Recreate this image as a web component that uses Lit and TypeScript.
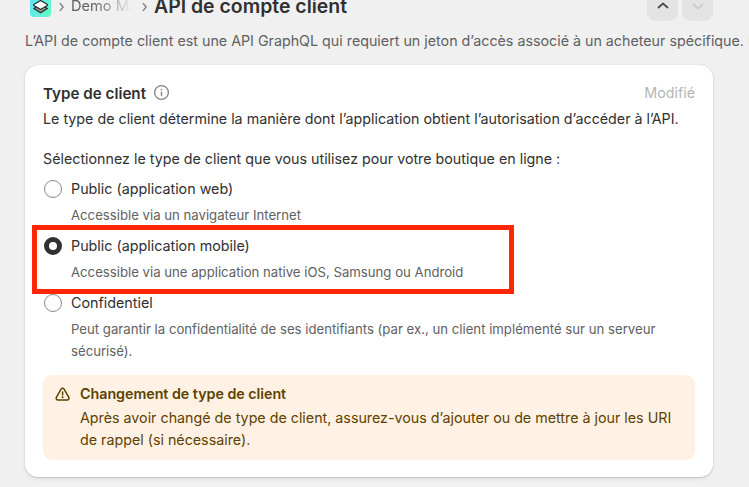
import { LitElement, html, css } from "lit";
import { customElement, property } from "lit/decorators.js";
import { classMap } from "lit/directives/class-map.js";

@customElement("client-choice")
export class ClientChoice extends LitElement {
  @property() label = "";
  @property() help = "";
  @property({ type: Boolean }) checked = false;

  static styles = css`
    :host { display: grid; grid-template-columns: 18px 1fr; column-gap: 9px; margin: 0 0 9px 1px; }
    .radio { box-sizing: border-box; width: 18px; height: 18px; margin-top: 2px; border: 1px solid #8a8a8a; border-radius: 50%; background: #fdfdfd; }
    .radio.on { border: 5px solid #303030; background: #fff; }
    .label { font-size: 14.3px; line-height: 22px; color: #303030; }
    .help { grid-column: 2; margin-top: 4px; font-size: 13.18px; line-height: 22px; color: #616161; }
  `;

  render() {
    return html`
      <span class=${classMap({ radio: true, on: this.checked })}></span>
      <span class="label">${this.label}</span>
      <span class="help">${this.help}</span>
    `;
  }
}

@customElement("app-root")
export class AppRoot extends LitElement {
  static styles = css`
    :host {
      display: block; position: relative; box-sizing: border-box; width: 749px; height: 487px; overflow: hidden;
      background: #f0f0f0; color: #303030; font-family: Inter, "Liberation Sans", sans-serif;
      font-size: 14.27px; line-height: 22px; white-space: nowrap;
    }
    svg { display: block; flex: none; }
    .header { display: flex; height: 30px; padding: 0 36px 0 30px; align-items: flex-start; }
    .app { margin-top: -5px; }
    .sep { margin: 2px 0 0 7px; }
    .crumb {
      width: 63px; margin: -5px 0 0 6px; overflow: hidden; color: #616161;
      font-size: 14.6px; -webkit-mask-image: linear-gradient(90deg, #000 35%, transparent 98%);
      mask-image: linear-gradient(90deg, #000 35%, transparent 98%);
    }
    .sep.second { margin-left: 8px; }
    h1 { margin: -5px 0 0 6px; font-size: 19.45px; line-height: 22px; font-weight: 635; }
    .pager { display: flex; gap: 4px; margin-left: auto; }
    .btn { display: flex; justify-content: center; width: 31px; height: 31px; margin-top: -10px; border-radius: 9px; background: #e3e3e3; }
    .btn svg { margin-top: 10px; }
    .intro { color: #616161; padding-left: 25px; height: 35px; }
    .card {
      box-sizing: border-box; width: 688px; height: 412px; margin-left: 25px; padding: 17px 18px; border-radius: 13px; background: #fff;
      box-shadow: 0 1px 1px #c8c8c8, 0 0 1px #bbb, 0 2px 4px #00000012;
    }
    .heading { display: flex; align-items: center; height: 22px; }
    h2 { margin: 0; padding-top: 1px; font-size: 15.2px; font-weight: 600; }
    .heading svg { margin: -1px 0 0 7px; }
    .status { margin-left: auto; color: #b5b5b5; }
    .desc { margin-top: 4px; }
    .prompt { margin: 18px 0 8px; }
    .banner {
      display: flex; box-sizing: border-box; height: 85px; margin-top: 13px; padding: 8px 9px;
      border-radius: 9px; background: #fff1e3; color: #5e4200;
    }
    .banner svg { margin: 1px 7px 0 0; }
    .strong { font-weight: 600; margin-bottom: 2px; letter-spacing: -0.02px; }
    .outline { position: absolute; box-sizing: border-box; left: 32px; top: 225px; width: 482px; height: 69px; border: 5px solid #ff2600; }
  `;

  private sep(second = false) {
    return html`<svg class=${classMap({ sep: true, second })} width="6" height="10" viewBox="0 0 6 10" fill="none" stroke="#858585" stroke-width="1.4" stroke-linecap="round" stroke-linejoin="round"><path d="M1.2 1.5 4.2 5l-3 3.5"/></svg>`;
  }

  render() {
    return html`
      <div class="header">
        <svg class="app" width="22" height="22" viewBox="0 0 22 22">
          <defs><linearGradient id="g" x1="0" y1="0" x2="1" y2=".6"><stop stop-color="#62dcf8"/><stop offset="1" stop-color="#62f8ca"/></linearGradient></defs>
          <rect x="0" y="0" width="21" height="22" rx="4" fill="url(#g)"/>
          <g stroke="#282828" stroke-width="1.2" stroke-linejoin="round">
            <path d="m3.8 13.5 6.8-3.6 6.8 3.6-6.8 4.2z" fill="#999"/>
            <path d="m3.8 9.5 6.8-4 6.8 4v1l-6.8 4-6.8-4z" fill="#fff"/>
          </g>
        </svg>
        ${this.sep()}
        <span class="crumb">Demo Ma</span>
        ${this.sep(true)}
        <h1>API de compte client</h1>
        <div class="pager">
          <span class="btn"><svg width="12" height="12" viewBox="0 0 12 12" fill="none" stroke="#4a4a4a" stroke-width="1.7" stroke-linecap="round" stroke-linejoin="round"><path d="m1.5 7.5 4.5-4 4.5 4"/></svg></span>
          <span class="btn"><svg width="12" height="12" viewBox="0 0 12 12" fill="none" stroke="#ccc" stroke-width="1.7" stroke-linecap="round" stroke-linejoin="round"><path d="m1.5 4.5 4.5 4 4.5-4"/></svg></span>
        </div>
      </div>
      <div class="intro">L’API de compte client est une API GraphQL qui requiert un jeton d’accès associé à un acheteur spécifique. Il</div>
      <div class="card">
        <div class="heading">
          <h2>Type de client</h2>
          <svg width="17" height="17" viewBox="0 0 17 17" fill="none" stroke="#858585" stroke-width="1.4" stroke-linecap="round"><circle cx="8.5" cy="8.5" r="6.9"/><path d="M8.5 8.1v3.5"/><circle cx="8.5" cy="5.6" r=".9" fill="#858585" stroke="none"/></svg>
          <span class="status">Modifié</span>
        </div>
        <div class="desc">Le type de client détermine la manière dont l’application obtient l’autorisation d’accéder à l’API.</div>
        <div class="prompt">Sélectionnez le type de client que vous utilisez pour votre boutique en ligne :</div>
        <client-choice label="Public (application web)" help="Accessible via un navigateur Internet"></client-choice>
        <client-choice checked label="Public (application mobile)" help="Accessible via une application native iOS, Samsung ou Android"></client-choice>
        <client-choice label="Confidentiel" .help=${html`Peut garantir la confidentialité de ses identifiants (par ex., un client implémenté sur un serveur<br>sécurisé).`}></client-choice>
        <div class="banner">
          <svg width="21" height="21" viewBox="0 0 21 21" fill="none" stroke="#5e4200" stroke-width="1.5" stroke-linecap="round" stroke-linejoin="round"><path d="M9.1 5.1c.7-1.2 2.3-1.2 3 0l4.7 8.2c.7 1.2-.2 2.6-1.5 2.6H5.9c-1.3 0-2.2-1.4-1.5-2.6z"/><path d="M10.6 8.1v2.8"/><circle cx="10.6" cy="13.3" r="1" fill="#5e4200" stroke="none"/></svg>
          <div>
            <div class="strong">Changement de type de client</div>
            <div>Après avoir changé de type de client, assurez-vous d’ajouter ou de mettre à jour les URI<br>de rappel (si nécessaire).</div>
          </div>
        </div>
      </div>
      <div class="outline"></div>
    `;
  }
}
